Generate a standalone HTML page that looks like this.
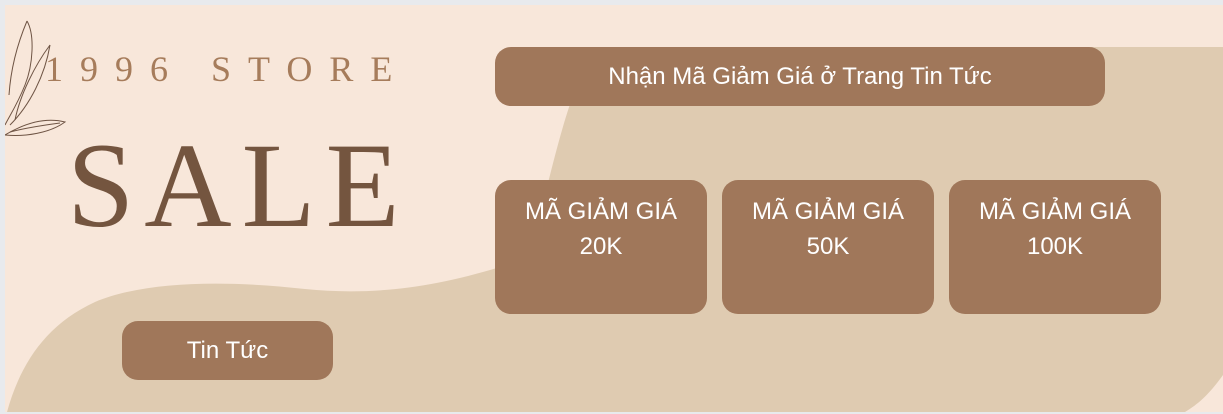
<!DOCTYPE html>
<html><head><meta charset="utf-8"><style>
html,body{margin:0;padding:0}
body{width:1223px;height:414px;background:#e8eaed;position:relative;overflow:hidden;font-family:"Liberation Sans",sans-serif}
#pg{position:absolute;left:5px;top:5px;width:1218px;height:407px;background:#f8e7da;overflow:hidden}
.b{position:absolute;background:#a0775a;color:#fff;border-radius:16px;text-align:center;font-size:24px}
.t{position:absolute;font-family:"Liberation Serif",serif}
</style></head><body>
<div id="pg">
<svg width="1218" height="407" style="position:absolute;left:0;top:0">
<path d="M2 407 C15 360 40 320 90 297 C140 276 220 275 300 284 C360 290 420 285 495 262 L540 190 C555 130 570 70 590 50 C600 42 640 42 660 42 L1218 42 L1218 370 C1205 388 1195 398 1180 407 Z" fill="#dfcbb1"/>
<g fill="none" stroke="#6e5444" stroke-width="1">
<path d="M22 16 C30 30 28 60 20 80 C12 100 5 110 0 120"/>
<path d="M22 16 C14 35 6 60 4 90"/>
<path d="M45 40 C40 70 25 100 5 120"/>
<path d="M45 40 C30 60 15 90 10 115"/>
<path d="M60 117 C40 112 20 118 0 130 C20 132 45 128 60 117 Z"/>
<path d="M5 127 C20 123 40 120 55 118"/>
</g>
</svg>
<div class="t" style="left:40px;top:43px;font-size:36px;letter-spacing:17px;color:#a67c5b;white-space:nowrap">1996 STORE</div>
<div class="t" style="left:62px;top:112px;font-size:121px;letter-spacing:10px;color:#74553f;white-space:nowrap">SALE</div>
<div class="b" style="left:490px;top:42px;width:610px;height:59px;line-height:59px">Nhận Mã Giảm Giá ở Trang Tin Tức</div>
<div class="b" style="left:490px;top:175px;width:212px;height:134px;line-height:35px;padding-top:14px;box-sizing:border-box">MÃ GIẢM GIÁ<br>20K</div>
<div class="b" style="left:717px;top:175px;width:212px;height:134px;line-height:35px;padding-top:14px;box-sizing:border-box">MÃ GIẢM GIÁ<br>50K</div>
<div class="b" style="left:944px;top:175px;width:212px;height:134px;line-height:35px;padding-top:14px;box-sizing:border-box">MÃ GIẢM GIÁ<br>100K</div>
<div class="b" style="left:117px;top:316px;width:211px;height:59px;line-height:59px">Tin Tức</div>
</div>
</body></html>
